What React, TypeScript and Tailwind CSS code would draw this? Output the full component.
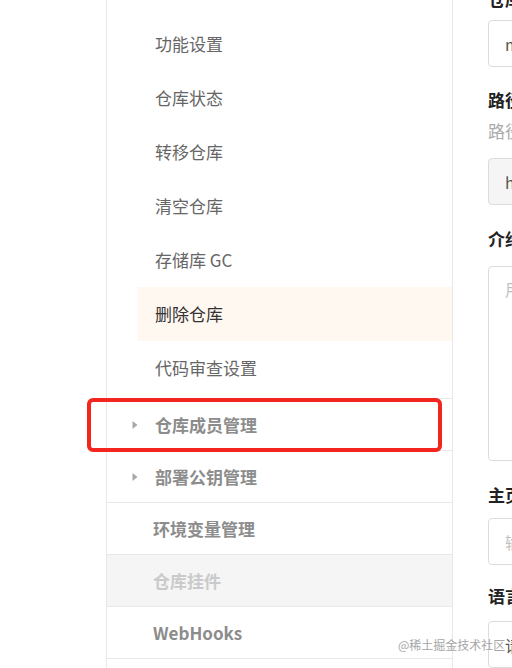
import { ReactNode } from "react"

const font = { fontFamily: '"Noto Sans CJK SC", "Noto Sans", sans-serif' }

const subItems = ["功能设置", "仓库状态", "转移仓库", "清空仓库", "存储库 GC", "删除仓库", "代码审查设置"]

function Caret() {
  return (
    <svg width="6" height="10" viewBox="0 0 6 10" className="absolute left-[25px] top-1/2 -translate-y-1/2">
      <path d="M0.5 1 L5.5 5 L0.5 9 Z" fill="#a8a8a8" />
    </svg>
  )
}

function GroupRow({ children, caret, muted }: { children: ReactNode; caret?: boolean; muted?: boolean }) {
  return (
    <div
      className={`relative h-[52px] border-b border-[#e8e8e8] flex items-center text-[17px] font-bold ${
        muted ? "bg-[#f5f5f5] text-[#cacaca] pl-[46px]" : caret ? "text-[#8c8c8c] pl-[48px]" : "text-[#8c8c8c] pl-[46px]"
      }`}
    >
      {caret && <Caret />}
      {children}
    </div>
  )
}

function Sidebar() {
  return (
    <div className="w-[347px] shrink-0 border-x border-[#e8e8e8] pt-[17px]">
      <div className="pl-[31px] border-b border-[#e8e8e8] pb-[3px]">
        {subItems.map((item) => {
          const active = item === "删除仓库"
          return (
            <div
              key={item}
              className={`h-[54px] flex items-center pl-[17px] text-[17px] ${
                active ? "bg-[#fff8f1] text-[#333333]" : "text-[#666666]"
              }`}
            >
              {item}
            </div>
          )
        })}
      </div>
      <GroupRow caret>仓库成员管理</GroupRow>
      <GroupRow caret>部署公钥管理</GroupRow>
      <GroupRow>环境变量管理</GroupRow>
      <GroupRow muted>仓库挂件</GroupRow>
      <GroupRow>WebHooks</GroupRow>
    </div>
  )
}

function Label({ children }: { children: ReactNode }) {
  return <div className="text-[17px] font-bold text-[#222222] whitespace-nowrap leading-[24px]">{children}</div>
}

function Field({ children, gray, tall, placeholder }: { children: ReactNode; gray?: boolean; tall?: boolean; placeholder?: boolean }) {
  return (
    <div
      className={`w-[200px] border border-[#dcdcdc] rounded-[4px] px-[16px] text-[16px] whitespace-nowrap ${
        tall ? "h-[195px] pt-[10px]" : "h-[47px] flex items-center"
      } ${gray ? "bg-[#f5f5f5]" : "bg-white"} ${placeholder ? "text-[#c0c0c0]" : "text-[#555555]"}`}
    >
      {children}
    </div>
  )
}

function FormPanel() {
  return (
    <div className="flex-1 min-w-0 overflow-hidden pl-[35px] -mt-[13px]">
      <Label>仓库名称</Label>
      <div className="mt-[9px]">
        <Field>my-repo</Field>
      </div>
      <div className="mt-[21px]">
        <Label>路径</Label>
      </div>
      <div className="mt-[7px] text-[17px] text-[#aaaaaa] whitespace-nowrap leading-[24px]">路径只允许字母、数字</div>
      <div className="mt-[15px]">
        <Field gray>https://example.com</Field>
      </div>
      <div className="mt-[22px]">
        <Label>介绍</Label>
      </div>
      <div className="mt-[15px]">
        <Field tall placeholder>用简短的语言来描述一下吧</Field>
      </div>
      <div className="mt-[22px]">
        <Label>主页</Label>
      </div>
      <div className="mt-[11px]">
        <Field placeholder>输入主页地址</Field>
      </div>
      <div className="mt-[19px]">
        <Label>语言</Label>
      </div>
      <div className="mt-[13px]">
        <Field>请选择语言</Field>
      </div>
    </div>
  )
}

export default function App() {
  return (
    <div className="relative w-[512px] h-[668px] overflow-hidden bg-white" style={font}>
      <div className="flex h-full">
        <div className="w-[106px] shrink-0" />
        <Sidebar />
        <FormPanel />
      </div>
      <div className="absolute left-[87px] top-[398px] w-[355px] h-[54px] border-[4px] border-[#f2261f] rounded-[6px] pointer-events-none" />
      <div className="absolute left-[398px] top-[636px] text-[12px] text-[#a6a6a6] whitespace-nowrap leading-[18px]">
        @稀土掘金技术社区
      </div>
    </div>
  )
}
